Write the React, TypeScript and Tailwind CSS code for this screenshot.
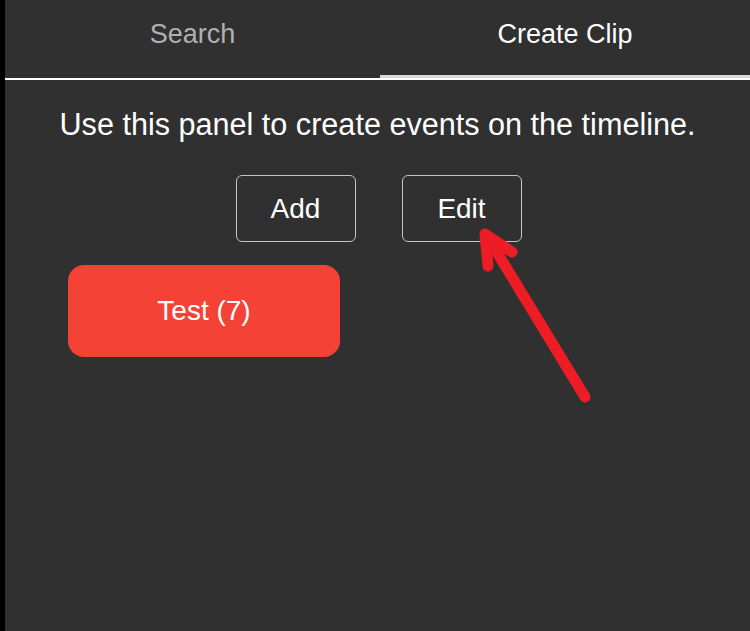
import React from "react";

export default function App() {
  const font = { fontFamily: '"Liberation Sans", Arial, sans-serif' };
  return (
    <div className="relative flex h-[631px] w-[750px] overflow-hidden" style={font}>
      <div className="w-[5px] bg-black" />
      <div className="flex flex-1 flex-col bg-[#303030]">
        <div className="flex h-[80px] border-b-2 border-white">
          <div className="flex flex-1 justify-center pt-[19px] text-[27px] leading-[30px] text-[#b0b0b0]">
            Search
          </div>
          <div className="flex w-[370px] justify-center border-b-[3px] border-[#d9d9d9] pt-[19px] text-[27px] leading-[30px] text-white">
            Create Clip
          </div>
        </div>
        <p className="mt-[27px] text-center text-[30.6px] leading-[34px] text-white">
          Use this panel to create events on the timeline.
        </p>
        <div className="mt-[34px] flex justify-center gap-[46px] pl-[2px]">
          <button className="h-[67px] w-[120px] rounded-[6px] border-[1.5px] border-[#c4c4c4] text-[28px] text-white">
            Add
          </button>
          <button className="h-[67px] w-[120px] rounded-[6px] border-[1.5px] border-[#c4c4c4] text-[28px] text-white">
            Edit
          </button>
        </div>
        <div className="ml-[63px] mt-[23px]">
          <button className="h-[92px] w-[272px] rounded-[16px] bg-[#f44336] text-[28px] text-white">
            Test (7)
          </button>
        </div>
      </div>
      <svg className="pointer-events-none absolute left-0 top-0" width="750" height="631">
        <g stroke="#ee1c25" strokeWidth="11" strokeLinecap="round" strokeLinejoin="round" fill="none">
          <line x1="585" y1="397" x2="487" y2="236" />
          <polyline points="488,266 485,234 512,252" />
        </g>
      </svg>
    </div>
  );
}
